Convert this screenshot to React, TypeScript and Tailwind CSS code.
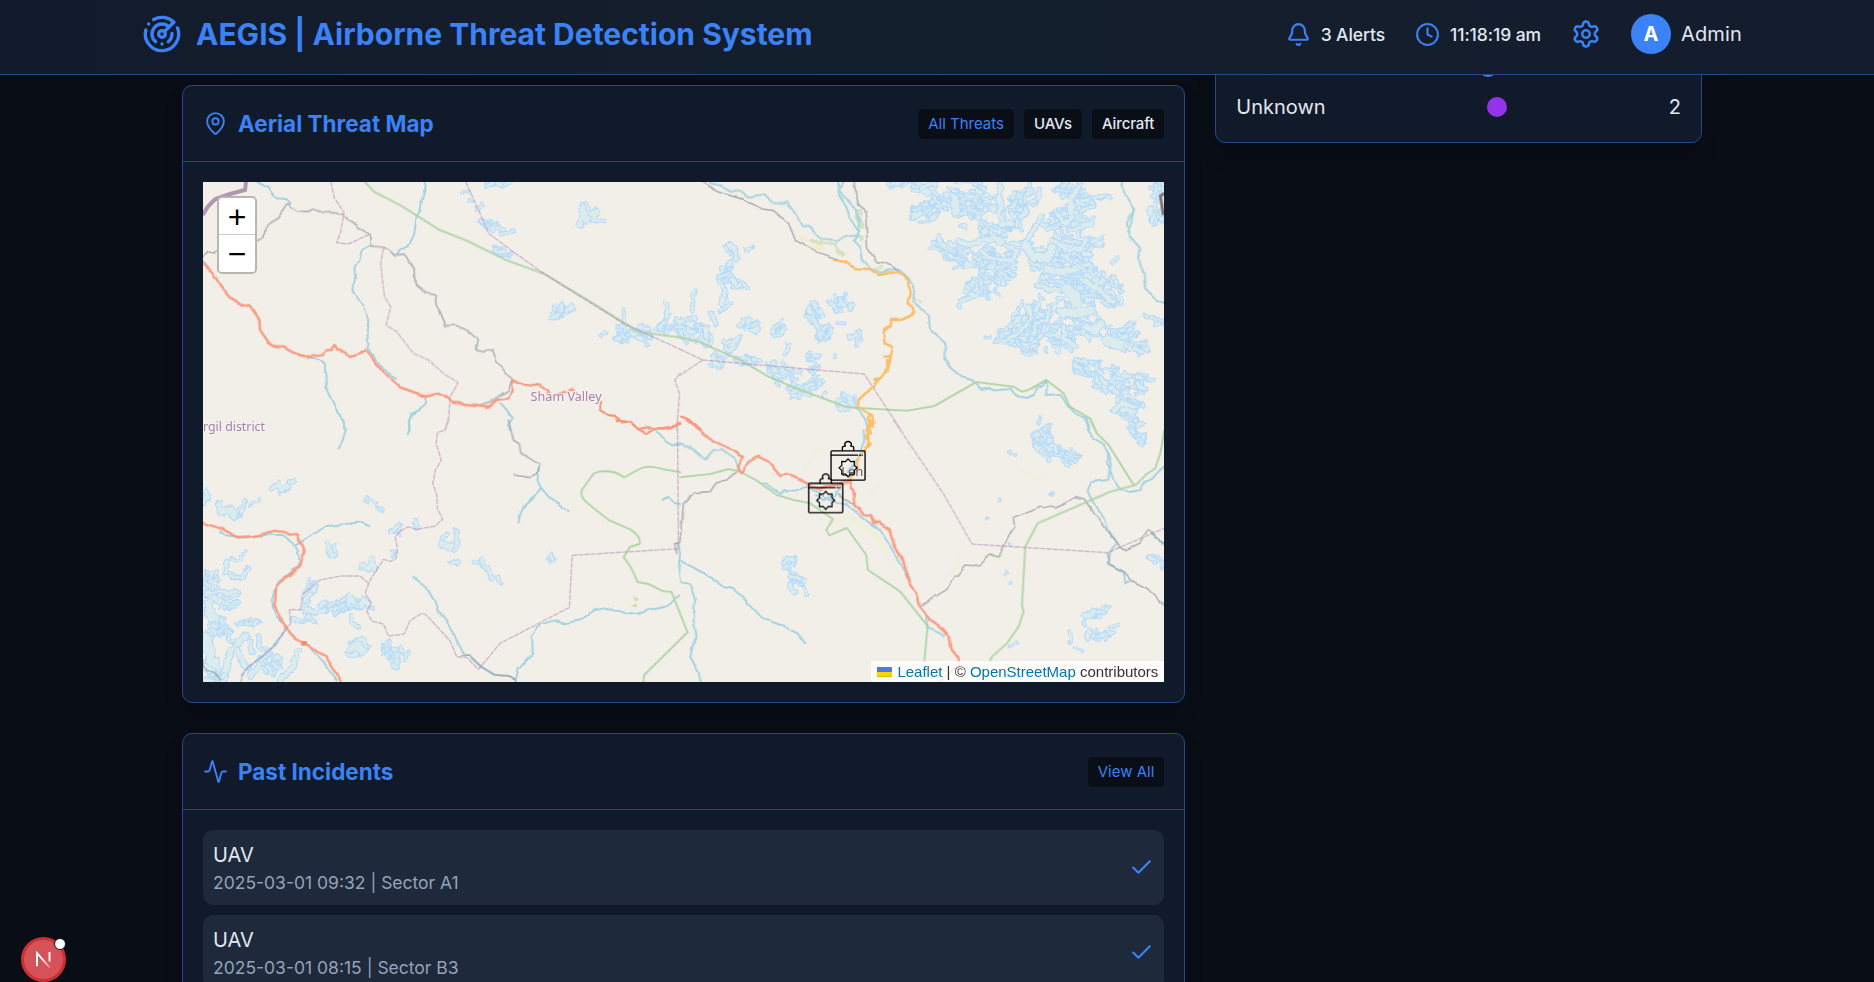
import React from "react";
import { Activity, Bell, Check, Clock, MapPin, Radar, Settings } from "lucide-react";

type Finger = [number, string];

function seeded(seed: number) {
  let s = seed;
  return () => {
    s = (s * 16807) % 2147483647;
    return s / 2147483647;
  };
}

/* Small glacier lobes scattered over an ellipse, mostly along one direction. */
function cluster(cx: number, cy: number, rx: number, ry: number, n: number, deg: number, spread = 70): Finger[] {
  const rnd = seeded(Math.round(cx * 31 + cy * 17 + n));
  rnd();
  return Array.from({ length: Math.round(n * 0.88) }, () => {
    const a = rnd() * Math.PI * 2;
    const r = Math.sqrt(rnd());
    const x = cx + Math.cos(a) * r * rx;
    const y = cy + Math.sin(a) * r * ry;
    const t = ((deg + (rnd() - 0.5) * spread) * Math.PI) / 180;
    const len = 10 + rnd() * 24;
    const dx = Math.cos(t) * len;
    const dy = Math.sin(t) * len;
    const bx = (rnd() - 0.5) * 16;
    const w = 4 + rnd() * 8;
    return [w, `M${(x - dx / 2).toFixed(1)} ${(y - dy / 2).toFixed(1)}Q${(x + bx).toFixed(1)} ${(y - bx).toFixed(1)} ${(x + dx / 2).toFixed(1)} ${(y + dy / 2).toFixed(1)}`] as Finger;
  });
}

function Ice({ items }: { items: Finger[] }) {
  return (
    <g fill="none" strokeLinecap="round" strokeLinejoin="round" filter="url(#rough)">
      {items.map(([w, d], i) => (
        <g key={i}>
          <path d={d} stroke="#b7dbf9" strokeWidth={w + 7} />
          <path d={d} stroke="#dcebeb" strokeWidth={w} />
        </g>
      ))}
    </g>
  );
}

const northEast: Finger[] = [
  ...cluster(70, 20, 50, 14, 12, 0),
  ...cluster(95, 95, 52, 30, 22, -30),
  ...cluster(200, 50, 90, 55, 52, 20),
  ...cluster(290, 120, 90, 60, 42, 40),
  ...cluster(395, 60, 45, 50, 26, -60),
  ...cluster(540, 55, 60, 55, 32, 10),
  ...cluster(620, 55, 18, 16, 5, 0),
  ...cluster(500, 130, 60, 50, 28, 30),
  ...cluster(565, 120, 40, 16, 8, 0),
  ...cluster(600, 195, 24, 22, 8, -10),
  ...cluster(150, 210, 32, 22, 10, 20),
  ...cluster(210, 230, 45, 24, 14, 0),
  ...cluster(300, 240, 60, 50, 34, 20),
  ...cluster(270, 315, 50, 40, 24, -60),
  ...cluster(335, 295, 16, 20, 6, 40),
  ...cluster(222, 348, 24, 14, 7, -10),
  ...cluster(430, 230, 60, 40, 26, 20),
  ...cluster(530, 230, 60, 50, 34, 25),
  ...cluster(490, 300, 55, 35, 24, 10),
  ...cluster(570, 300, 55, 55, 34, 30),
  ...cluster(640, 330, 45, 45, 24, 60),
  ...cluster(540, 370, 50, 50, 28, 20),
  ...cluster(470, 410, 50, 40, 24, -60),
  ...cluster(400, 430, 50, 60, 40, -60),
  ...cluster(340, 470, 45, 22, 16, -20),
  ...cluster(388, 505, 28, 22, 12, 40),
  ...cluster(500, 470, 45, 45, 28, 30),
  ...cluster(590, 440, 45, 35, 22, 20),
  ...cluster(680, 460, 42, 40, 24, -50),
  ...cluster(735, 500, 18, 18, 8, 0),
  ...cluster(575, 560, 34, 32, 20, 20),
  ...cluster(640, 595, 45, 40, 26, 40),
  ...cluster(720, 610, 50, 32, 20, 0),
  ...cluster(690, 680, 48, 35, 24, 20),
  ...cluster(715, 735, 14, 18, 5, 60),
  ...cluster(738, 775, 14, 16, 5, -60),
  ...cluster(788, 30, 18, 26, 8, 80),
  ...cluster(785, 110, 22, 32, 12, 80),
  ...cluster(785, 428, 16, 12, 5, 30),
  [18, "M175 50L185 90L178 100"],
  [14, "M315 10L312 60L318 130L350 135"],
  [14, "M190 185L225 195L260 180L300 175L330 195L385 190"],
  [12, "M438 110L415 150L385 195L400 230"],
  [24, "M390 195L415 230L455 235L470 205"],
  [12, "M330 195L370 215L345 240L290 235L260 215"],
  [14, "M485 100L510 130L530 110L525 60L550 20"],
  [12, "M470 180L520 210L560 205L572 180"],
  [10, "M520 150L560 140L590 130"],
  [20, "M455 270L500 275L540 270"],
  [12, "M425 315L470 330L500 330"],
  [28, "M515 325L540 350L545 385"],
  [14, "M560 300L600 320L630 345L650 370"],
  [24, "M500 395L540 400L590 395"],
  [22, "M575 440L600 450L615 430"],
  [26, "M635 480L660 490L690 500"],
  [12, "M690 500L725 512L745 518"],
  [10, "M460 380L455 420L420 430L415 460"],
  [10, "M400 380L405 420L385 450L330 485"],
  [10, "M505 440L510 480L545 500"],
  [26, "M680 675L715 690"],
  [14, "M655 690L680 670L720 680"],
  [8, "M650 250L665 235"],
  [8, "M130 170L140 195L150 205"],
  [5, "M270 472L284 470"],
  [6, "M450 505L452 512"],
  [4, "M190 382L194 376"],
  [5, "M745 404L760 412"],
  [5, "M175 265L205 260"],
  [5, "M300 335L314 346"],
  [5, "M435 345L442 360"],
];

const northMid: Finger[] = [
  [14, "M150 255L165 270L168 295"],
  [8, "M138 262L150 280"],
  [9, "M196 272L214 262"],
  ...cluster(145, 335, 20, 26, 10, -50),
  ...cluster(172, 370, 20, 12, 7, 10),
  [10, "M120 362L134 395L128 440"],
  [6, "M118 455L152 430"],
  [8, "M42 392L36 450"],
  [11, "M92 460L108 492"],
  ...cluster(30, 505, 55, 32, 24, 40),
  ...cluster(75, 530, 22, 22, 10, 70),
  ...cluster(205, 495, 34, 20, 10, -50),
  ...cluster(155, 560, 30, 26, 12, -30),
  ...cluster(300, 510, 20, 24, 9, -60),
  [11, "M325 555L314 580"],
  ...cluster(395, 460, 24, 26, 12, 60),
  [12, "M398 470L412 500L420 540"],
  ...cluster(430, 525, 22, 26, 8, -60),
  ...cluster(485, 430, 34, 28, 12, 70),
  [6, "M470 488L492 490"],
  ...cluster(528, 532, 12, 12, 4, -60),
  ...cluster(410, 592, 20, 14, 6, 0),
  [5, "M462 586L464 592"],
  ...cluster(120, 605, 22, 22, 9, 40),
  ...cluster(205, 602, 35, 16, 10, 20),
  ...cluster(300, 640, 50, 30, 18, 30),
  ...cluster(355, 690, 30, 18, 9, 20),
  ...cluster(400, 660, 26, 36, 14, -60),
  ...cluster(495, 728, 30, 22, 12, 50),
  [6, "M435 698L428 706"],
  ...cluster(635, 72, 18, 6, 4, 0),
];

const northWest: Finger[] = [
  [15, "M1200 195L1208 140L1220 180"],
  [9, "M1218 135L1235 165L1250 150L1240 180L1268 184"],
  ...cluster(950, 70, 34, 5, 5, 0),
  [5, "M845 100L866 98"],
  [5, "M868 120L880 124"],
  [8, "M890 148L904 132"],
  ...cluster(940, 192, 30, 18, 9, 30),
  [6, "M962 222L1002 214"],
  ...cluster(968, 270, 24, 16, 9, 20),
  ...cluster(1140, 455, 32, 20, 10, -50),
  [10, "M1330 450L1334 490"],
  ...cluster(1325, 520, 32, 20, 12, 20),
  [6, "M1262 528L1276 516"],
  ...cluster(1380, 520, 40, 18, 12, 30),
  [11, "M1458 432L1460 470"],
  ...cluster(1465, 495, 38, 20, 12, -40),
  [6, "M1398 548L1400 556"],
];

const southWest: Finger[] = [
  [13, "M78 215L84 235L74 245"],
  [14, "M280 205L296 190L300 212L322 200"],
  [8, "M325 185L344 184"],
  [16, "M118 250L124 280L150 265L160 290L180 270"],
  [8, "M182 280L196 242"],
  [5, "M212 252L236 242"],
  [5, "M562 230L558 242"],
  [8, "M576 240L588 252"],
  [6, "M596 262L606 272"],
  [9, "M706 302L708 324"],
  ...cluster(648, 330, 16, 14, 5, -60),
  [7, "M640 392L638 410"],
  [20, "M785 370L800 380L815 378"],
  [9, "M828 332L830 380L820 390"],
  [8, "M788 355L800 342"],
  [9, "M808 428L834 426"],
  [10, "M880 428L905 430L915 445"],
  [12, "M905 420L930 460L938 476"],
  [8, "M954 468L962 490"],
  [9, "M1104 412L1122 416"],
  [7, "M1112 404L1116 426"],
  [10, "M442 370L452 408L468 408"],
  [8, "M462 378L470 400"],
  [14, "M545 435L566 445L575 420L582 445"],
  [7, "M150 415L185 420L194 392"],
  [9, "M140 425L138 460L165 465"],
  [10, "M150 470L185 475L208 444"],
  ...cluster(95, 490, 28, 36, 18, 80),
  [14, "M85 525L120 545L150 560"],
  [11, "M80 520L130 516L172 518"],
  [9, "M138 555L160 562L176 545"],
  ...cluster(150, 545, 26, 20, 8, -30),
  [24, "M85 550L92 590L110 605"],
  [10, "M125 600L150 635"],
  ...cluster(115, 640, 36, 26, 14, 60),
  ...cluster(200, 608, 28, 12, 7, -30),
  [30, "M74 650L90 700L100 740L110 770"],
  [16, "M75 740L110 765"],
  [18, "M195 650L155 690L140 740L130 780"],
  [11, "M172 690L188 730L205 745"],
  [10, "M212 665L216 700"],
  [9, "M236 650L240 688"],
  [15, "M262 700L240 735L212 765"],
  ...cluster(270, 725, 28, 34, 16, 60),
  [13, "M354 692L340 740L300 780"],
  ...cluster(100, 770, 28, 14, 8, 0),
  ...cluster(390, 515, 18, 26, 7, -60),
  [14, "M375 570L405 578L430 570L470 560L500 555L540 560"],
  ...cluster(475, 560, 100, 16, 20, -20),
  [10, "M505 555L510 525L520 545"],
  [10, "M545 560L550 535L562 555"],
  ...cluster(378, 598, 24, 12, 7, 10),
  [10, "M512 590L520 615L532 620"],
  [36, "M520 690L530 675L545 685"],
  [12, "M505 704L525 706"],
  [8, "M525 660L540 655L565 680"],
  ...cluster(640, 700, 38, 22, 16, 70),
  [7, "M620 668L622 678"],
  [9, "M640 735L654 746"],
  [7, "M686 695L672 720"],
];

const southEast: Finger[] = [
  ...cluster(320, 428, 18, 16, 8, -30),
  [7, "M328 455L334 480"],
  ...cluster(355, 490, 26, 24, 10, 40),
  [9, "M374 505L380 524"],
  ...cluster(1085, 30, 42, 30, 14, -40),
  ...cluster(1080, 72, 34, 32, 14, 40),
  ...cluster(1120, 100, 34, 18, 10, 20),
  ...cluster(1170, 110, 30, 22, 11, 40),
  [5, "M985 98L1005 102"],
  ...cluster(1362, 20, 18, 18, 6, 40),
  [8, "M1380 66L1390 44"],
  [4, "M955 236L957 243"],
  [5, "M1114 222L1118 224"],
  [4, "M921 296L924 296"],
  [4, "M988 368L989 374"],
  [4, "M977 454L978 461"],
  [4, "M987 486L988 489"],
  ...cluster(1420, 418, 8, 8, 3, 60),
  ...cluster(1440, 430, 10, 10, 3, 60),
  ...cluster(1240, 580, 26, 12, 7, -40),
  [6, "M1280 556L1286 562"],
  [6, "M1212 606L1214 612"],
  [9, "M1168 636L1172 664"],
  [7, "M1184 682L1208 692"],
  [11, "M1226 632L1222 656"],
  ...cluster(1260, 644, 34, 14, 10, -20),
  [6, "M1290 620L1316 614"],
  [4, "M994 676L1010 672"],
];

interface LineSpec {
  quad: string;
  d: string;
}

const A = "translate(-23 -22) scale(.33333)";
const B = "translate(477 -22) scale(.33333)";
const C = "translate(-23 238) scale(.33333)";
const D = "translate(477 238) scale(.33333)";
const E = "translate(692 -2) scale(.33333)";

function Lines({ items, color, width, dash, opacity }: { items: LineSpec[]; color: string; width: number; dash?: string; opacity?: number }) {
  return (
    <g fill="none" stroke={color} strokeWidth={width} strokeLinejoin="round" strokeLinecap="round" strokeDasharray={dash} opacity={opacity}>
      {items.map((l, i) => (
        <path key={i} transform={l.quad} d={l.d} />
      ))}
    </g>
  );
}

const rivers: LineSpec[] = [
  { quad: A, d: "M235 66L262 84L290 115L318 117L332 130" },
  { quad: A, d: "M733 66L737 78L725 120L722 150L710 168L702 225L685 256L660 268L652 280" },
  { quad: A, d: "M570 255L545 270L538 300L523 320L525 355L518 395L540 425L552 440L568 480L562 520L566 570L600 615L650 660" },
  { quad: A, d: "M66 300L85 325" },
  { quad: A, d: "M385 592L420 598L434 612L438 680L465 735L488 780L496 810" },
  { quad: A, d: "M740 710L736 735L718 750L693 762L686 790L689 810" },
  { quad: A, d: "M960 730L998 774L984 795L990 810" },
  { quad: B, d: "M90 70L120 76L150 95L185 95L205 110L250 104L280 130L320 128L345 160L365 198L390 202L420 236L470 240L500 230L536 225" },
  { quad: B, d: "M474 66L476 105L498 140L512 180L536 215L520 240L538 260L545 300L570 325L600 338L655 325L685 360L702 380L700 425L745 465L750 510L795 550L792 595L812 625L845 652L875 660L905 690L925 684L950 695L990 682L1005 708L1040 714L1060 705L1075 680L1100 664L1098 705L1140 702L1160 735L1185 760L1215 775L1226 810" },
  { quad: B, d: "M490 66L476 90L500 120L522 140L540 180L536 215" },
  { quad: B, d: "M1324 66L1334 105L1362 150L1340 185L1345 225L1380 265L1376 300L1390 340L1394 385L1425 415L1452 430" },
  { quad: B, d: "M1360 150L1352 190L1340 215" },
  { quad: B, d: "M530 745L552 770L565 810" },
  { quad: C, d: "M490 0L497 30L488 60L475 88" },
  { quad: C, d: "M686 0L688 20L683 44" },
  { quad: C, d: "M120 335L135 346L190 352L250 345L305 345L345 375L358 410L355 440L290 490L275 540L290 590L322 622L270 690L210 740L185 770" },
  { quad: C, d: "M345 375L370 362L390 348L440 318L500 312L545 306L568 318" },
  { quad: C, d: "M700 473L745 510L765 540L775 570L800 605L850 700L868 708L900 740L945 764L985 768L1006 780" },
  { quad: C, d: "M375 670L430 725L470 785" },
  { quad: C, d: "M1076 140L1072 185L1083 203L1060 235L1030 262L1022 280L1015 308" },
  { quad: C, d: "M1083 203L1105 230L1140 252L1162 273" },
  { quad: C, d: "M1006 780L1015 748L1058 700L1056 650L1080 614L1120 602L1150 610L1195 602L1245 570L1280 564L1310 575L1375 582L1410 568L1460 555L1500 530" },
  { quad: C, d: "M1425 28L1460 65L1480 76L1500 74" },
  { quad: C, d: "M1448 240L1465 234L1485 250L1500 252" },
  { quad: C, d: "M1490 370L1500 400L1495 450L1500 480" },
  { quad: D, d: "M0 70L28 78L50 100L75 118L100 90L125 88L165 115L178 155" },
  { quad: D, d: "M250 190L270 200L300 222L312 210L345 212L380 200L420 222L450 240L500 255L545 290L600 330L640 395L690 480" },
  { quad: D, d: "M480 190L465 225L430 240L405 228" },
  { quad: D, d: "M505 160L535 110L552 60L550 30" },
  { quad: D, d: "M0 422L75 462L125 497L160 505L205 550L245 593L310 620L352 640L375 670" },
  { quad: D, d: "M0 485L30 497L45 540L40 600L48 640L30 710L55 755L62 786" },
  { quad: D, d: "M738 590L742 622L775 635L792 650" },
  { quad: D, d: "M1215 0L1222 28L1240 55L1275 75L1292 135L1283 180L1232 186L1222 210L1240 250L1275 300L1285 330L1312 370L1290 395L1285 430L1330 455L1335 490L1350 486" },
  { quad: D, d: "M1280 90L1280 130L1300 175L1320 205L1350 216L1380 210L1392 185L1420 175L1450 140" },
  { quad: D, d: "M1415 335L1450 375" },
];

const borders: LineSpec[] = [
  { quad: A, d: "M453 66L462 112L492 158L482 215L470 248L505 252L570 222" },
  { quad: A, d: "M610 265L602 310L606 350L613 410L632 440L618 495L650 515L700 580L745 600L790 640L834 668L810 710L806 770L795 810" },
  { quad: A, d: "M857 66L895 150L925 220L985 265L1090 340L1330 490L1500 568" },
  { quad: A, d: "M1500 640L1484 660L1498 700L1490 810" },
  { quad: B, d: "M0 568L68 600L250 616L552 642L662 810" },
  { quad: B, d: "M68 600L0 645" },
  { quad: C, d: "M806 0L795 30L772 38L768 70L784 120L766 150L758 190L770 225L772 265L788 298L765 318L710 328L685 320L662 332L645 350L652 385L648 415L632 424L610 418L570 480L555 520L575 550L560 572L575 603L610 612L625 648L672 642L690 602L725 580L738 584L810 662L830 710L860 712L895 748L960 670L1168 562L1176 406L1495 386L1492 0" },
  { quad: C, d: "M565 490L540 468L480 468L420 480L368 522L362 570L328 568L332 610L300 650L270 690L190 755L182 786" },
  { quad: D, d: "M640 0L790 222L875 372L1282 398L1450 325" },
];

const greens: LineSpec[] = [
  { quad: A, d: "M555 66L582 95L665 138L775 208L860 242L985 303L1090 340L1230 425L1375 516L1500 532" },
  { quad: B, d: "M0 532L55 545L180 600L265 650L345 684L500 742L680 752L762 738L888 666L1000 680L1024 695L1044 690L1098 660L1150 700L1168 740L1230 776L1245 810" },
  { quad: C, d: "M1500 157L1450 148Q1405 134 1380 146L1332 172Q1300 150 1270 154Q1240 156 1235 168L1204 212Q1200 232 1225 252L1285 300L1350 328Q1385 350 1378 372L1350 380L1330 412Q1352 435 1372 486L1405 492L1450 514L1474 516L1522 637L1392 765L1390 786" },
  { quad: D, d: "M0 172L90 162L145 147L180 155L230 182L290 225L340 240L390 250L458 297L438 330L447 346L500 324L558 405L563 450L660 515L742 618L732 725" },
  { quad: D, d: "M1230 0L1250 40L1285 75L1360 195L1370 192L1395 165L1425 145L1440 100L1452 30" },
  { quad: D, d: "M1365 195L1290 215L1072 310L1035 380L1025 555L1030 575L1015 620L980 670L935 710L928 725" },
];

const tracks: LineSpec[] = [
  { quad: A, d: "M66 290L85 275L100 280L115 265" },
  { quad: A, d: "M225 240L252 230L255 205L270 190L290 175L322 130L350 152L382 155L400 147L430 158L465 158L500 172L545 208L568 225L572 258L612 262L645 285L675 282L702 325L705 372L738 400L765 405L768 435L780 455L798 498L825 495L860 510L895 540L888 570L910 576L938 570L950 605L995 660L985 690L960 705L945 720L900 735" },
  { quad: B, d: "M70 66L108 95L190 118L245 147L280 152L325 190L345 238L430 285L470 300" },
  { quad: B, d: "M522 66L530 130L555 150L562 265L590 305L620 310L655 332" },
  { quad: C, d: "M985 0L1000 60L1018 72L1022 98L1078 134L1072 160L1050 170L1002 162" },
  { quad: C, d: "M66 715L80 755L100 756L122 780" },
  { quad: C, d: "M850 710L870 708L905 740L940 764L985 768L1006 780" },
  { quad: C, d: "M1500 365L1482 372L1490 400" },
  { quad: D, d: "M165 158L140 180L110 185L90 215L45 218L10 250L5 300L0 360" },
  { quad: D, d: "M725 555L800 508L820 470L835 465L855 435L898 438L930 402L955 412L975 370L1002 320L1000 295L1050 275L1080 258L1130 264L1185 230L1212 237L1245 285L1312 370L1315 385L1335 390L1380 365L1405 330L1425 350L1452 372" },
  { quad: D, d: "M1282 400L1290 435L1330 455L1350 480L1400 505L1452 555" },
  { quad: D, d: "M475 220L500 245L520 252" },
];

const reds: LineSpec[] = [
  { quad: A, d: "M66 312L90 330L118 370L148 408L185 440L208 435L238 478L240 510L268 550L290 562L310 562L340 578L385 594L400 585L432 582L440 570L455 570L464 555L470 570L490 575L510 588L558 572L600 625L660 682L740 710L765 702L795 708L820 728L880 734L925 740L950 720L985 715L998 690L995 660L1040 678L1075 672L1102 690L1115 710L1175 688L1200 710" },
  { quad: A, d: "M1262 725L1260 750L1285 768L1310 772L1330 790L1350 785L1375 808L1400 802L1440 806L1500 795" },
  { quad: C, d: "M1310 0L1350 8L1398 42L1425 25L1470 25L1500 10" },
  { quad: B, d: "M0 770L25 778L60 810" },
  { quad: D, d: "M20 0L75 45L100 65L165 92L185 110L172 150L187 160L205 125L235 110L265 125L300 168L322 162L385 192L420 210L455 195L510 182L520 215L522 255L550 282L572 285L580 308L598 308L628 328L640 370L670 425L690 490L710 520L720 560L752 600L780 620L808 655L815 690L835 715L838 735L775 786" },
  { quad: C, d: "M66 308L125 326L175 352L225 348L285 332L312 336L325 344L352 342L372 395L360 438L288 497L285 555L310 610L342 655L372 670L438 710L482 786" },
];

const oranges: LineSpec[] = [
  { quad: B, d: "M462 300L495 306L520 324L570 328L595 345L655 335L680 360L692 400L685 430L702 455L690 468L662 480L632 480L632 495L610 515L612 548L632 560L635 575L625 620L605 650L535 720L532 740L575 765L580 790L560 810" },
  { quad: B, d: "M612 590L630 588L622 632L620 600M585 662L600 655M570 765L562 775L578 800" },
  { quad: D, d: "M570 0L560 30L565 55L555 90L535 110L530 150L510 175" },
  { quad: D, d: "M578 5L564 15L572 40L556 48L568 72L556 86" },
];

const octagram = (() => {
  const pts: string[] = [];
  for (let i = 0; i < 16; i++) {
    const r = i % 2 === 0 ? 27 : 20;
    const a = (i * Math.PI) / 8;
    pts.push(`${(Math.sin(a) * r).toFixed(1)},${(-Math.cos(a) * r).toFixed(1)}`);
  }
  return pts.join(" ");
})();

function Marker({ x, y }: { x: number; y: number }) {
  return (
    <g transform={`translate(${x} ${y})`} fill="none" stroke="#000" strokeWidth="4" strokeLinejoin="round" strokeLinecap="round">
      <rect x="-51" y="-51" width="102" height="88" rx="3" />
      <path d="M-50 -38H28M34 -38H37M42 -38H43" />
      <path d="M-17 -52V-60Q-17 -65 -8 -65Q-12 -72 -8 -76Q0 -82 8 -76Q12 -72 8 -65Q17 -65 17 -60V-52" />
      <polygon points={octagram} strokeWidth="3.6" />
    </g>
  );
}

function TerrainMap() {
  return (
    <svg className="block h-full w-full" viewBox="0 0 961 500" preserveAspectRatio="none">
      <defs>
        <filter id="rough" x="-5%" y="-5%" width="110%" height="110%" colorInterpolationFilters="sRGB">
          <feTurbulence type="fractalNoise" baseFrequency="0.045" numOctaves="2" seed="4" />
          <feDisplacementMap in="SourceGraphic" scale="20" xChannelSelector="R" yChannelSelector="G" result="bent" />
          <feGaussianBlur in="bent" stdDeviation="1.1" />
        </filter>
        <filter id="wiggle" x="0" y="0" width="100%" height="100%" colorInterpolationFilters="sRGB">
          <feTurbulence type="fractalNoise" baseFrequency="0.1" numOctaves="1" seed="9" />
          <feDisplacementMap in="SourceGraphic" scale="4.5" xChannelSelector="R" yChannelSelector="G" result="bent" />
          <feGaussianBlur in="bent" stdDeviation="0.4" />
        </filter>
      </defs>
      <rect width="961" height="500" fill="#f2efe9" />
      <g transform={A}><Ice items={northWest} /></g>
      <g transform={B}><Ice items={northMid} /></g>
      <g transform={E}><Ice items={northEast} /></g>
      <g transform={C}><Ice items={southWest} /></g>
      <g transform={D}><Ice items={southEast} /></g>
      <g transform={B} fill="none" strokeLinecap="round" strokeLinejoin="round" filter="url(#rough)">
        <path d="M390 242L430 250L465 250L475 275L488 286M528 170L545 200M535 150L540 160M540 230L545 240" stroke="#d6e2bf" strokeWidth="11" />
        <path d="M355 232L375 240M395 262L430 262" stroke="#f4ecd0" strokeWidth="14" />
        <path d="M590 322L606 320M705 418L720 424" stroke="#dfe6c8" strokeWidth="12" />
      </g>
      <g transform={D} fill="none" strokeLinecap="round" strokeLinejoin="round" stroke="#eef0d6">
        <path d="M458 310L500 290L540 310L590 350L620 400" strokeWidth="16" opacity=".8" />
        <path d="M370 150L400 105L430 85M570 215L600 190M835 395L832 440L810 465M640 440L665 470M1022 152L1060 172L1096 175" strokeWidth="7" opacity=".8" />
      </g>
      <g transform={C} fill="#cfe0b4"><path d="M1358 528L1378 536L1366 546ZM1352 560L1366 548L1372 562Z" /></g>
      <g filter="url(#wiggle)">
        <Lines items={rivers} color="#a6d3e0" width={6} />
        <Lines items={tracks} color="#a4a6ac" width={5} opacity={0.8} />
      </g>
      <Lines items={greens} color="#aad3a0" width={6.2} opacity={0.85} />
      <Lines items={borders} color="#b08ab2" width={4.2} dash="13 6" opacity={0.55} />
      <g filter="url(#wiggle)">
        <Lines items={oranges} color="#f9bf6c" width={7.5} />
        <Lines items={reds} color="#fa987e" width={7.2} />
      </g>
      <path transform={A} d="M68 165L85 138L105 118L150 102L195 90L198 66" fill="none" stroke="#ab8ba9" strokeWidth="12" opacity=".9" />
      <path transform={B} d="M1452 100L1440 108L1449 165" fill="none" stroke="#77747c" strokeWidth="9" />
      <path transform={C} d="M364 663h16v14h-16z" fill="#f68a70" />
      <g fontFamily="'Noto Sans', sans-serif" fill="#a67fa8" stroke="#f7f3ee" strokeWidth="2" paintOrder="stroke">
        <text x="327.5" y="219.2" fontSize="12.6" textLength="71" lengthAdjust="spacingAndGlyphs">Sham Valley</text>
        <text x="0" y="248.6" fontSize="12.6" textLength="62" lengthAdjust="spacingAndGlyphs">rgil district</text>
      </g>
      <text x="638" y="294.500" fontFamily="'Noto Sans', sans-serif" fontSize="13" fill="#66646c">Leh</text>
      <g transform={D}>
        <Marker x={503.5} y={143.5} />
        <Marker x={436.5} y={241} />
      </g>
    </svg>
  );
}

function Card({ icon, title, actions, children }: { icon: React.ReactNode; title: string; actions: React.ReactNode; children: React.ReactNode }) {
  return (
    <section className="rounded-[10px] border border-[#25498a] bg-[#111a2a] shadow-[0_12px_20px_-4px_rgba(0,0,0,0.25)]">
      <div className="flex items-center justify-between border-b border-[#25498a] p-5">
        <h2 className="flex items-center gap-2.5 text-[22.5px] leading-[35px] font-bold text-[#3b82f6]">
          {icon}
          {title}
        </h2>
        <div className="flex gap-2.5">{actions}</div>
      </div>
      <div className="p-5">{children}</div>
    </section>
  );
}

function Pill({ label, active }: { label: string; active?: boolean }) {
  return (
    <button className={`rounded-[5px] bg-[#0a0e17] px-2.5 py-[5px] text-[15px] leading-5 ${active ? "text-[#3b82f6]" : "font-medium tracking-[-0.1px] text-[#e2e8f0]"}`}>
      {label}
    </button>
  );
}

function Incident({ type, detail }: { type: string; detail: string }) {
  return (
    <li className="flex items-center justify-between rounded-[10px] bg-[#1e293b] p-2.5">
      <div>
        <p className="text-[20px] leading-[30px] text-[#e2e8f0]">{type}</p>
        <p className="text-[17.5px] leading-[25px] text-[#94a3b8]">{detail}</p>
      </div>
      <Check size={25} className="text-[#3b82f6]" />
    </li>
  );
}

export default function App() {
  return (
    <div className="relative h-[982px] w-full overflow-hidden bg-[#090d16] font-['Inter',sans-serif] text-[#e2e8f0]">
      <header className="relative z-10 h-[75px] border-b border-[#25498a] bg-linear-to-r from-[#121b2b] via-[#141f2d] to-[#131c2d]">
        <div className="ml-[142px] flex h-[68px] w-[1600px] items-center justify-between">
          <div className="flex items-center gap-[14px] text-[#3b82f6]">
            <Radar size={40} />
            <h1 className="text-[30px] leading-10 font-bold whitespace-nowrap">AEGIS | Airborne Threat Detection System</h1>
          </div>
          <div className="flex items-center gap-[30px] whitespace-nowrap">
            <div className="flex items-center gap-2.5 text-[17.5px] leading-[25px] font-medium tracking-[-0.08px]">
              <Bell size={25} className="text-[#3b82f6]" />
              3 Alerts
            </div>
            <div className="flex items-center gap-2.5 text-[17.5px] leading-[25px] font-medium tracking-[-0.08px]">
              <Clock size={25} className="text-[#3b82f6]" />
              11:18:19 am
            </div>
            <Settings size={30} className="text-[#3b82f6]" />
            <div className="flex items-center gap-2.5">
              <span className="flex size-10 items-center justify-center rounded-full bg-[#3b82f6] text-[20px] font-bold text-white">A</span>
              <span className="text-[20px] leading-[30px] tracking-[0.15px]">Admin</span>
            </div>
          </div>
        </div>
      </header>

      <main className="mt-2.5 ml-[182px] grid w-[1520px] grid-cols-3 items-start gap-[30px]">
        <div className="col-span-2 flex flex-col gap-[30px]">
          <Card
            icon={<MapPin size={25} strokeWidth={1.8} />}
            title="Aerial Threat Map"
            actions={
              <>
                <Pill label="All Threats" active />
                <Pill label="UAVs" />
                <Pill label="Aircraft" />
              </>
            }
          >
            <div className="relative h-[500px] overflow-hidden">
              <TerrainMap />
              <div className="absolute top-[13.5px] left-[14px] flex flex-col overflow-hidden rounded-[5px] border-[2px] border-[#b9b6b1] font-['Liberation_Sans',sans-serif] text-[32px] leading-[38px] text-black">
                <button className="h-[37px] w-9 border-b border-[#ccc] bg-white">+</button>
                <button className="h-[37px] w-9 bg-white">−</button>
              </div>
              <div className="absolute right-0 bottom-0 flex h-[21px] items-center bg-white/80 px-[6px] font-['Liberation_Sans',sans-serif] text-[15px] leading-[21px] whitespace-pre text-[#333]">
                <svg className="mr-[5px] h-[10px] w-[15px]" viewBox="0 0 15 10">
                  <path fill="#4c7be1" d="M0 0h15v5H0z" />
                  <path fill="#ffd500" d="M0 5h15v4H0z" />
                  <path fill="#e0bc00" d="M0 9h15v1H0z" />
                </svg>
                <span className="text-[#0078a8]">Leaflet</span>
                {" | © "}
                <span className="text-[#0078a8]">OpenStreetMap</span>
                {" contributors"}
              </div>
            </div>
          </Card>

          <Card icon={<Activity size={25} strokeWidth={1.8} />} title="Past Incidents" actions={<Pill label="View All" active />}>
            <ul className="flex flex-col gap-2.5">
              <Incident type="UAV" detail="2025-03-01 09:32 | Sector A1" />
              <Incident type="UAV" detail="2025-03-01 08:15 | Sector B3" />
            </ul>
          </Card>
        </div>

        <aside className="-mt-[54px] flex flex-col gap-2.5 rounded-[10px] border border-[#25498a] bg-[#111a2a] p-5 text-[20px] leading-[30px] shadow-[0_12px_20px_-4px_rgba(0,0,0,0.25)]">
          <div className="flex h-[30px] items-center justify-center pl-[58px]">
            <span className="size-5 rounded-full bg-[#3b82f6]" />
          </div>
          <div className="flex items-center justify-between">
            <span>Unknown</span>
            <span className="size-5 rounded-full bg-[#9333ea]" />
            <span>2</span>
          </div>
        </aside>
      </main>

      <div className="absolute bottom-0 left-[21px] flex size-[45px] items-center justify-center rounded-full border-[3px] border-[#ce2f35] bg-[#d65259]">
        <svg className="h-[17px] w-[17px]" viewBox="0 0 17 17" fill="none">
          <defs>
            <linearGradient id="fade" x1="0" y1="0" x2="0" y2="17" gradientUnits="userSpaceOnUse">
              <stop offset=".5" stopColor="#fff" />
              <stop offset="1" stopColor="#fff" stopOpacity=".2" />
            </linearGradient>
          </defs>
          <path d="M2 15.500V2L15 17" stroke="url(#fade)" strokeWidth="1.900" />
          <path d="M2 15V1.500" stroke="#fff" strokeWidth="2" />
          <path d="M14.500 1V10.500" stroke="url(#fade)" strokeWidth="1.900" />
        </svg>
        <span className="absolute -top-[2px] -right-[3px] size-3 rounded-full border border-[#111] bg-white" />
      </div>
    </div>
  );
}
